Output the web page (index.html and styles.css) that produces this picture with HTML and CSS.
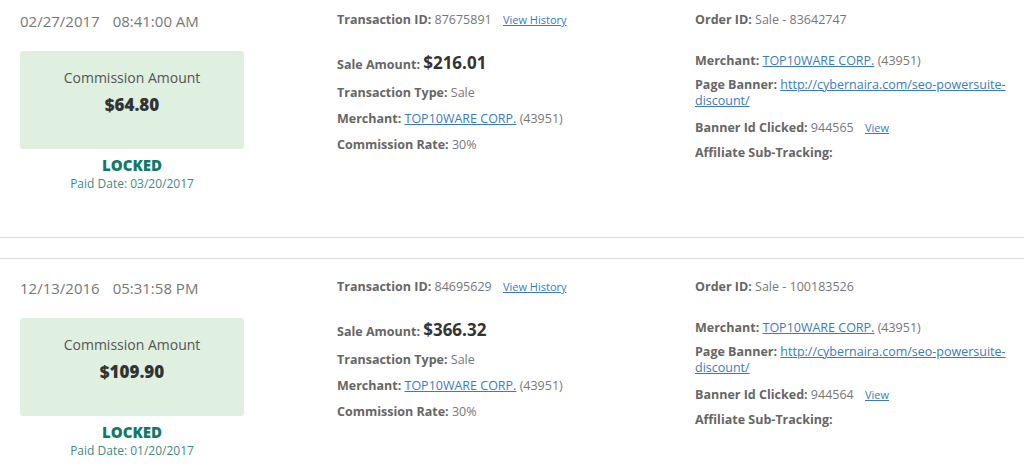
FILE: index.html
```html
<!DOCTYPE html>
<html lang="en">
<head>
    <meta charset="UTF-8">
    <meta name="viewport" content="width=device-width, initial-scale=1.0">
    <title>Commission History</title>
    <link rel="stylesheet" href="styles.css">
</head>
<body>

<div class="txn-list">

    <div class="txn">
        <div class="txn-left">
            <div class="txn-date"><span>02/27/2017</span><span class="txn-time">08:41:00 AM</span></div>
            <div class="commission-box">
                <div class="commission-label">Commission Amount</div>
                <div class="commission-value">$64.80</div>
            </div>
            <div class="txn-status">LOCKED</div>
            <div class="paid-date">Paid Date: 03/20/2017</div>
        </div>

        <div class="txn-mid">
            <p class="txn-id"><b>Transaction ID:</b> 87675891 <a href="#" class="small-link">View History</a></p>
            <p class="sale-line"><b>Sale Amount:</b> <span class="sale-amount">$216.01</span></p>
            <p><b>Transaction Type:</b> Sale</p>
            <p><b>Merchant:</b> <a href="#">TOP10WARE CORP.</a> (43951)</p>
            <p><b>Commission Rate:</b> 30%</p>
        </div>

        <div class="txn-right">
            <p class="txn-id"><b>Order ID:</b> Sale - 83642747</p>
            <p><b>Merchant:</b> <a href="#">TOP10WARE CORP.</a> (43951)</p>
            <p class="banner-line"><b>Page Banner:</b> <a href="#">http://cybernaira.com/seo-powersuite-discount/</a></p>
            <p><b>Banner Id Clicked:</b> 944565 <a href="#" class="small-link">View</a></p>
            <p><b>Affiliate Sub-Tracking:</b></p>
        </div>
    </div>

    <div class="txn">
        <div class="txn-left">
            <div class="txn-date"><span>12/13/2016</span><span class="txn-time">05:31:58 PM</span></div>
            <div class="commission-box">
                <div class="commission-label">Commission Amount</div>
                <div class="commission-value">$109.90</div>
            </div>
            <div class="txn-status">LOCKED</div>
            <div class="paid-date">Paid Date: 01/20/2017</div>
        </div>

        <div class="txn-mid">
            <p class="txn-id"><b>Transaction ID:</b> 84695629 <a href="#" class="small-link">View History</a></p>
            <p class="sale-line"><b>Sale Amount:</b> <span class="sale-amount">$366.32</span></p>
            <p><b>Transaction Type:</b> Sale</p>
            <p><b>Merchant:</b> <a href="#">TOP10WARE CORP.</a> (43951)</p>
            <p><b>Commission Rate:</b> 30%</p>
        </div>

        <div class="txn-right">
            <p class="txn-id"><b>Order ID:</b> Sale - 100183526</p>
            <p><b>Merchant:</b> <a href="#">TOP10WARE CORP.</a> (43951)</p>
            <p class="banner-line"><b>Page Banner:</b> <a href="#">http://cybernaira.com/seo-powersuite-discount/</a></p>
            <p><b>Banner Id Clicked:</b> 944564 <a href="#" class="small-link">View</a></p>
            <p><b>Affiliate Sub-Tracking:</b></p>
        </div>
    </div>

</div>

</body>
</html>
```

FILE: styles.css
```css
body {
    font-family: 'Open Sans', sans-serif;
    margin: 0;
    background-color: #ffffff;
    color: #777777;
    overflow: hidden;
}
.txn {
    display: flex;
    height: 218px;
    padding-top: 19px;
    border-top: 1px solid #dcdcdc;
    border-bottom: 1px solid #dcdcdc;
    margin-bottom: 20px;
}
.txn:first-child {
    border-top: none;
    height: 226px;
    padding-top: 11px;
}
.txn-left {
    width: 224px;
    margin-left: 20px;
    margin-right: 93px;
    text-align: center;
}
.txn-date {
    display: flex;
    gap: 13px;
    font-size: 15px;
    line-height: 20px;
    color: #777777;
}
.commission-box {
    margin-top: 20px;
    height: 98px;
    box-sizing: border-box;
    padding-top: 17px;
    background-color: #dfefe0;
    border-radius: 3px;
}
.commission-label {
    font-size: 14px;
    line-height: 20px;
    color: #555555;
}
.commission-value {
    margin-top: 5px;
    font-size: 17px;
    font-weight: 800;
    line-height: 24px;
    color: #333333;
}
.txn-status {
    margin-top: 6px;
    font-size: 15px;
    font-weight: 800;
    line-height: 20px;
    color: #0f7a66;
}
.paid-date {
    font-size: 12px;
    line-height: 17px;
    color: #3f8a7f;
}
.txn-mid {
    width: 358px;
}
.txn-right {
    width: 312px;
}
.txn-mid p,
.txn-right p {
    margin: 0 0 9px;
    font-size: 12.5px;
    line-height: 17px;
}
.txn-right p {
    margin-bottom: 8px;
}
.txn-mid b,
.txn-right b {
    color: #666666;
}
.txn-mid p.txn-id {
    margin-bottom: 23px;
}
.txn-right p.txn-id {
    margin-bottom: 24px;
}
.txn-right p.banner-line {
    line-height: 16px;
    margin-bottom: 10px;
}
.txn-mid p.sale-line {
    line-height: 24px;
    margin-bottom: 7px;
}
.sale-amount {
    font-size: 17px;
    font-weight: bold;
    color: #333333;
}
a {
    color: #3a7bbf;
}
.small-link {
    font-size: 11px;
    margin-left: 8px;
}
```
